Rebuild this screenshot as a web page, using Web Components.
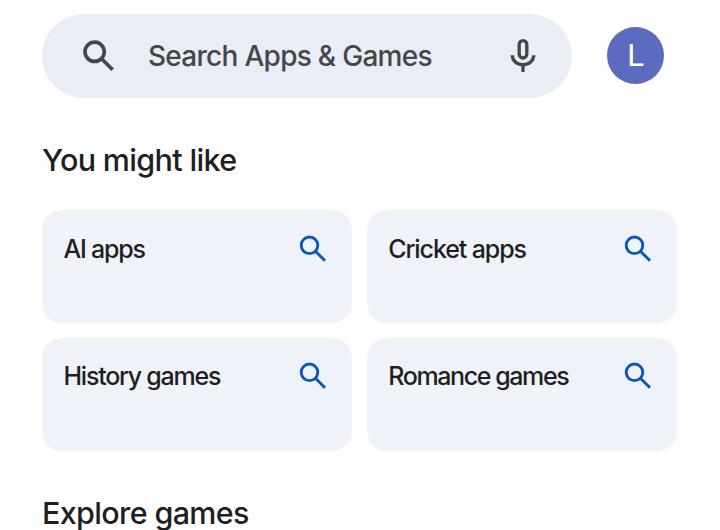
<!DOCTYPE html>
<html lang="en">
<head>
<meta charset="utf-8">
<meta name="viewport" content="width=device-width, initial-scale=1">
<title>Search Apps &amp; Games</title>
<style>
  body {
    margin: 0;
    height: 530px;
    overflow: hidden;
    background: #fefefe;
    color: #1f1f1f;
    font-family: Inter, Roboto, sans-serif;
  }
</style>
</head>
<body>
  <store-page>
    <store-header slot="header">
      <search-bar>Search Apps &amp; Games</search-bar>
      <user-avatar>L</user-avatar>
    </store-header>
    <store-section>
      <span slot="title">You might like</span>
      <suggestion-card style="letter-spacing: -1.2px">AI apps</suggestion-card>
      <suggestion-card style="letter-spacing: -1.1px">Cricket apps</suggestion-card>
      <suggestion-card style="letter-spacing: -1.25px">History games</suggestion-card>
      <suggestion-card style="letter-spacing: -1.4px">Romance games</suggestion-card>
    </store-section>
    <store-section>
      <span slot="title">Explore games</span>
    </store-section>
  </store-page>

<script>
// Page column
class StorePage extends HTMLElement {
  constructor() {
    super();
    this.attachShadow({ mode: "open" });
    this.shadowRoot.innerHTML = `
      <style>
        :host {
          display: flex;
          flex-direction: column;
          gap: 42px;
          box-sizing: border-box;
          height: 530px;
          overflow: hidden;
          padding: 14px 43px 0 42px;
        }

        ::slotted(*) {
          flex-shrink: 0;
        }
      </style>
      <slot name="header"></slot>
      <slot></slot>
    `;
  }
}

// Search bar + avatar row
class StoreHeader extends HTMLElement {
  constructor() {
    super();
    this.attachShadow({ mode: "open" });
    this.shadowRoot.innerHTML = `
      <style>
        :host {
          display: flex;
          align-items: center;
          justify-content: space-between;
          padding-right: 13px;
        }
      </style>
      <slot></slot>
    `;
  }
}

class SearchBar extends HTMLElement {
  constructor() {
    super();
    this.attachShadow({ mode: "open" });
    this.shadowRoot.innerHTML = `
      <style>
        :host {
          display: flex;
          align-items: center;
          box-sizing: border-box;
          width: 530px;
          height: 84px;
          padding: 0 28px 0 36px;
          border-radius: 42px;
          background: #e8edf6;
          color: #444749;
        }

        .label {
          flex: 1;
          margin-left: 28px;
          font-size: 28px;
          font-weight: 480;
          letter-spacing: -0.72px;
          white-space: nowrap;
        }

        svg {
          display: block;
          width: 42px;
          height: 42px;
          fill: none;
          stroke: currentColor;
        }
      </style>
      <svg viewBox="0 0 24 24" stroke-width="2.1">
        <circle cx="9.5" cy="9.6" r="5.5"></circle>
        <path d="M13.5 13.6L19.8 19.9"></path>
      </svg>
      <span class="label"><slot></slot></span>
      <svg viewBox="0 0 42 42" stroke-width="3.3">
        <rect x="17.2" y="5.6" width="7.6" height="17.4" rx="3.8"></rect>
        <path d="M10.2 20.3a10.8 9.4 0 0 0 21.6 0M21 29.5v7.5"></path>
      </svg>
    `;
  }
}

class UserAvatar extends HTMLElement {
  constructor() {
    super();
    this.attachShadow({ mode: "open" });
    this.shadowRoot.innerHTML = `
      <style>
        :host {
          display: flex;
          align-items: center;
          justify-content: center;
          width: 57px;
          height: 57px;
          margin-bottom: 1px;
          border-radius: 50%;
          background: #5c6bc0;
          color: #fff;
          font: 31px/1 Roboto, sans-serif;
        }
      </style>
      <slot></slot>
    `;
  }
}

// Heading with a two column grid under it
class StoreSection extends HTMLElement {
  constructor() {
    super();
    this.attachShadow({ mode: "open" });
    this.shadowRoot.innerHTML = `
      <style>
        :host {
          display: block;
        }

        h2 {
          margin: 0;
          font-size: 30.5px;
          font-weight: 500;
          line-height: 40px;
          letter-spacing: -0.65px;
        }

        .grid {
          display: grid;
          grid-template-columns: 1fr 1fr;
          gap: 14.5px;
        }

        ::slotted(suggestion-card) {
          position: static;
        }

        h2 + .grid {
          padding-top: 30px;
        }
      </style>
      <h2><slot name="title"></slot></h2>
      <div class="grid"><slot></slot></div>
    `;
  }
}

class SuggestionCard extends HTMLElement {
  constructor() {
    super();
    this.attachShadow({ mode: "open" });
    this.shadowRoot.innerHTML = `
      <style>
        :host {
          display: flex;
          align-items: flex-start;
          justify-content: space-between;
          box-sizing: border-box;
          height: 113px;
          padding: 20.5px 21px 0 21.5px;
          border-radius: 20px;
          background: #eff3f9;
          font-size: 25px;
          font-weight: 450;
          line-height: 36px;
          white-space: nowrap;
        }

        svg {
          width: 36px;
          height: 36px;
          fill: none;
          stroke: #0b57b9;
          stroke-width: 2.9;
        }
      </style>
      <span><slot></slot></span>
      <svg viewBox="0 0 36 36">
        <circle cx="14.5" cy="14.3" r="8.3"></circle>
        <path d="M20.4 20.2L30 29.8"></path>
      </svg>
    `;
  }
}

customElements.define("store-page", StorePage);
customElements.define("store-header", StoreHeader);
customElements.define("search-bar", SearchBar);
customElements.define("user-avatar", UserAvatar);
customElements.define("store-section", StoreSection);
customElements.define("suggestion-card", SuggestionCard);
</script>
</body>
</html>
